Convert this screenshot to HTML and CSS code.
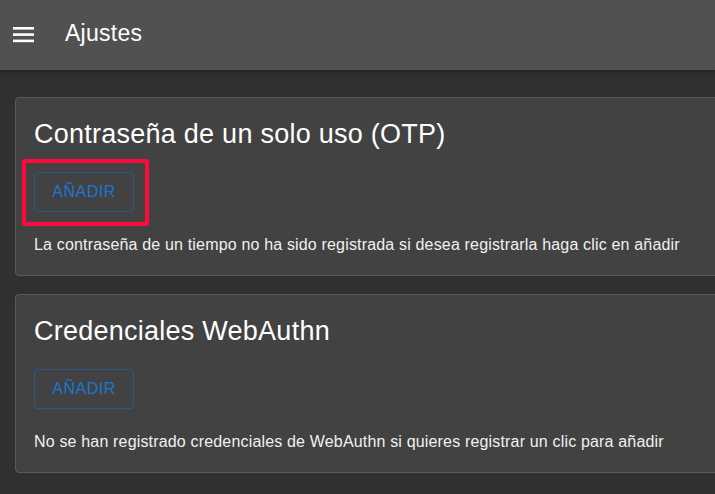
FILE: index.html
```html
<!DOCTYPE html>
<html lang="es">
<head>
<meta charset="utf-8">
<title>Ajustes</title>
<link rel="stylesheet" href="styles.css">
</head>
<body>
<header class="appbar">
  <svg class="menu-icon" width="21" height="16" viewBox="0 0 21 16">
    <rect x="0" y="0" width="21" height="2.6" fill="#fff"/>
    <rect x="0" y="6.3" width="21" height="2.6" fill="#fff"/>
    <rect x="0" y="12.6" width="21" height="2.6" fill="#fff"/>
  </svg>
  <span class="appbar-title">Ajustes</span>
</header>
<main class="content">
  <section class="card">
    <h2 class="card-title">Contraseña de un solo uso (OTP)</h2>
    <div class="btn-wrap highlighted"><button class="btn-outline">Añadir</button></div>
    <p class="card-text">La contraseña de un tiempo no ha sido registrada si desea registrarla haga clic en añadir</p>
  </section>
  <section class="card">
    <h2 class="card-title">Credenciales WebAuthn</h2>
    <div class="btn-wrap"><button class="btn-outline">Añadir</button></div>
    <p class="card-text">No se han registrado credenciales de WebAuthn si quieres registrar un clic para añadir</p>
  </section>
</main>
</body>
</html>
```
FILE: styles.css
```css
html, body {
  margin: 0;
  padding: 0;
  background: #303030;
  overflow: hidden;
  font-family: "Liberation Sans", Arial, sans-serif;
  color: #fff;
}
.appbar {
  height: 70px;
  background: #515151;
  display: flex;
  align-items: center;
  box-shadow: 0 2px 4px rgba(0,0,0,0.3);
}
.menu-icon {
  margin-left: 13px;
  margin-top: -1px;
}
.appbar-title {
  margin-left: 31px;
  font-size: 23px;
  letter-spacing: 0.25px;
  margin-top: -4px;
}
.content {
  padding: 27px 0 0 15px;
  margin-right: -30px;
  display: flex;
  flex-direction: column;
  gap: 18px;
}
.card {
  background: #424242;
  border: 1px solid #5a5a5a;
  border-radius: 4px;
  padding: 20px 18px 20px 18px;
}
.card-title {
  margin: 0;
  font-weight: normal;
  font-size: 27px;
  letter-spacing: 0.25px;
  line-height: 32px;
}
.btn-wrap {
  margin-top: 22px;
  position: relative;
  display: inline-block;
}
.btn-outline {
  display: block;
  width: 100px;
  height: 40px;
  background: transparent;
  border: 1px solid #2a5a8a;
  border-radius: 4px;
  color: #1976d2;
  font-family: "Liberation Sans", Arial, sans-serif;
  font-size: 16px;
  text-transform: uppercase;
  letter-spacing: 0.5px;
  padding: 0;
}
.highlighted::after {
  content: "";
  position: absolute;
  left: -12px;
  top: -13px;
  right: -15px;
  bottom: -14px;
  border: 4px solid #ff0a3c;
  border-radius: 3px;
}
.card-text {
  margin: 23px 0 0 0;
  font-size: 16px;
  letter-spacing: 0.17px;
  line-height: 20px;
  color: #f0f0f0;
}
```
